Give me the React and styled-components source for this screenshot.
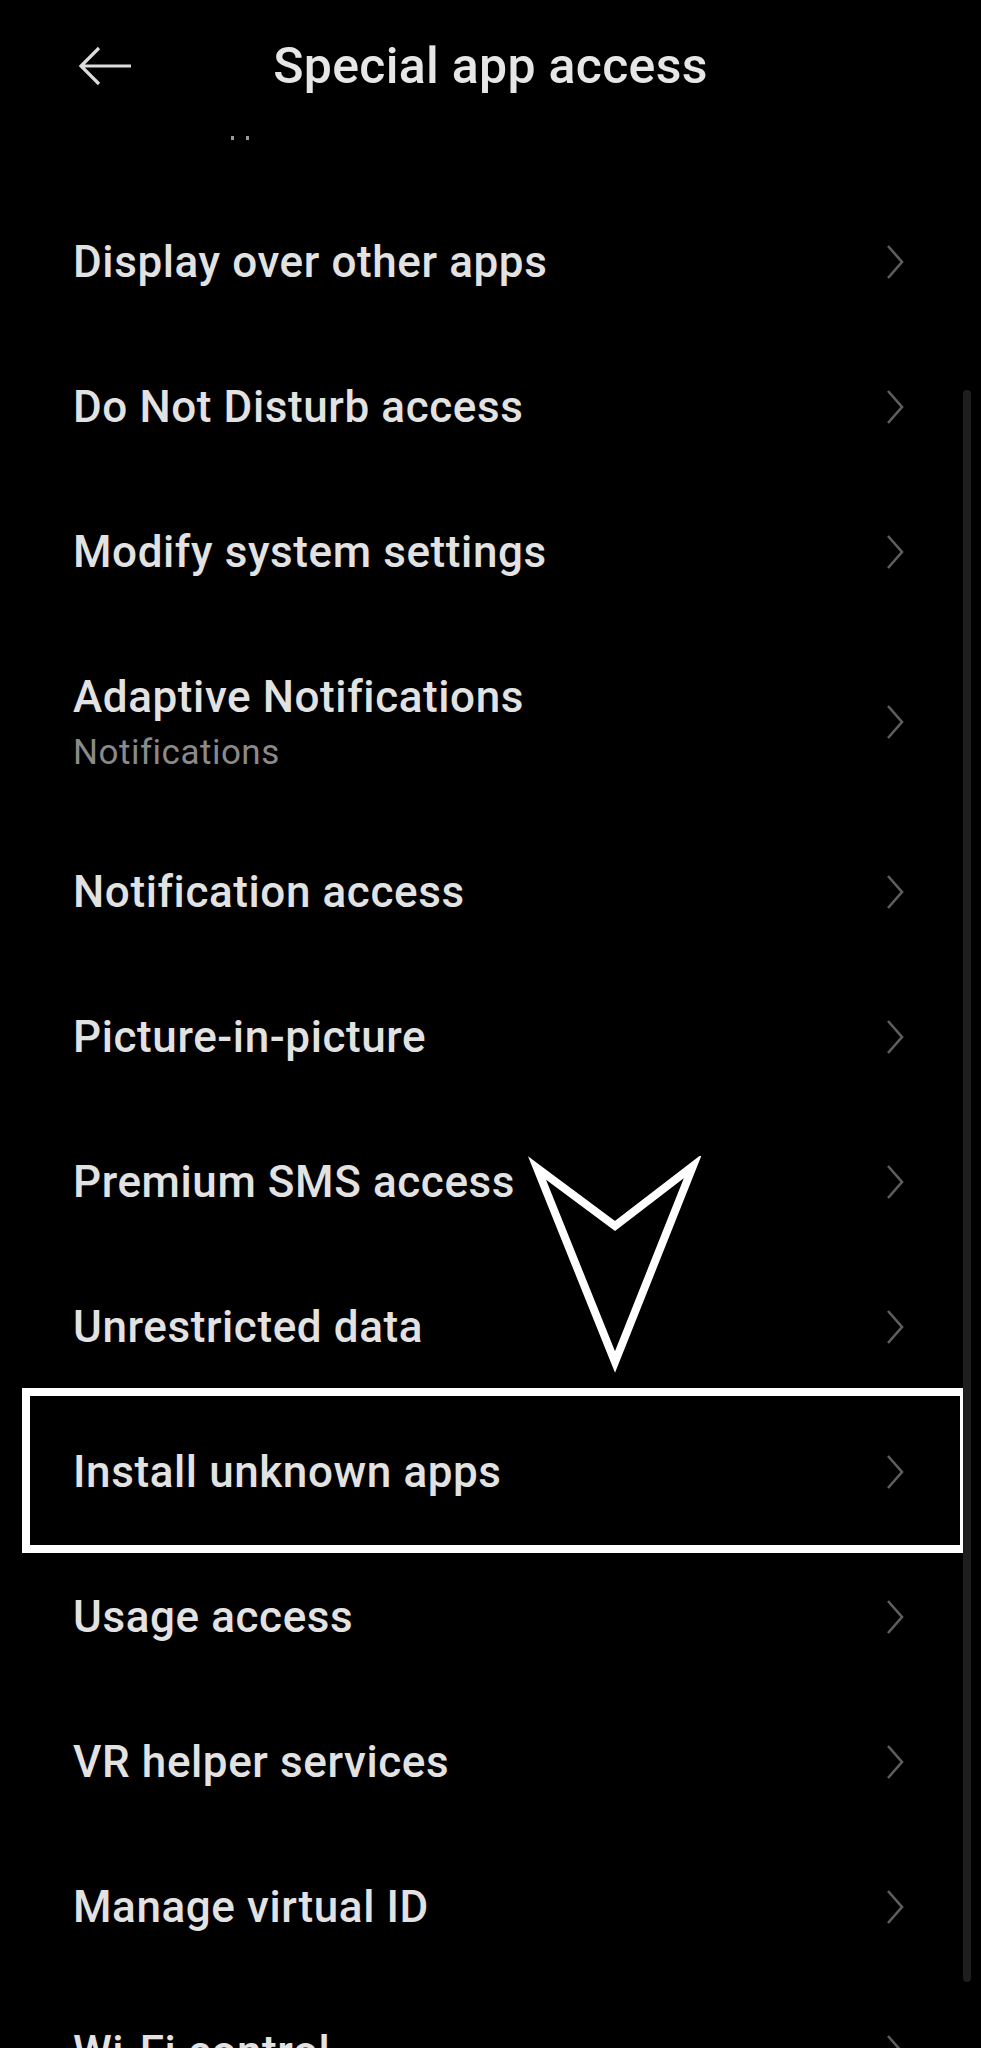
import React from 'react';
import styled, { createGlobalStyle } from 'styled-components';

const GlobalStyle = createGlobalStyle`
  html, body {
    margin: 0;
    padding: 0;
    background: #000;
  }
  body {
    font-family: Roboto, "Noto Sans", "Liberation Sans", sans-serif;
    -webkit-font-smoothing: antialiased;
  }
`;

const Screen = styled.div`
  position: relative;
  width: 981px;
  height: 2048px;
  overflow: hidden;
  background: #000;
  color: #e4e4e4;
`;

const Header = styled.header`
  display: grid;
  grid-template-columns: 1fr auto 1fr;
  align-items: center;
  height: 132px;
`;

const BackButton = styled.button`
  justify-self: start;
  display: flex;
  align-items: center;
  margin-left: 78px;
  padding: 0;
  border: 0;
  background: none;
  cursor: pointer;
`;

const Title = styled.h1`
  margin: 0;
  font-size: 50px;
  font-weight: 500;
  color: #e6e6e6;
  letter-spacing: 0.3px;
`;

const Dots = styled.div`
  display: flex;
  gap: 12px;
  height: 56px;
  padding-left: 231px;
  padding-top: 4px;
  box-sizing: border-box;

  span {
    width: 3px;
    height: 4px;
    background: #9a9a9a;
  }
`;

const List = styled.ul`
  list-style: none;
  margin: 0;
  padding: 0;
`;

const Row = styled.li`
  position: relative;
  display: flex;
  align-items: center;
  justify-content: space-between;
  height: ${({ tall }) => (tall ? '195px' : '145px')};
  padding: 2px 76px 0 73px;
  box-sizing: border-box;

  ${({ highlighted }) =>
    highlighted &&
    `
    &::after {
      content: '';
      position: absolute;
      top: -10px;
      bottom: -10px;
      left: 22px;
      right: 13px;
      border: 8px solid #fff;
      pointer-events: none;
    }
  `}
`;

const Texts = styled.div`
  display: flex;
  flex-direction: column;
  gap: 9px;
`;

const Label = styled.span`
  font-size: 44px;
  font-weight: 500;
  color: #e2e2e2;
  letter-spacing: 0.6px;
`;

const Sub = styled.span`
  font-size: 35px;
  color: #8a8a8a;
  letter-spacing: 0.5px;
`;

const Scrollbar = styled.div`
  position: absolute;
  right: 10px;
  top: 390px;
  width: 8px;
  height: 1592px;
  border-radius: 4px;
  background: #1e1e1e;
`;

const Pointer = styled.svg`
  position: absolute;
  left: 525px;
  top: 1156px;
`;

const Chevron = () => (
  <svg width="20" height="38" viewBox="0 0 20 38" fill="none">
    <path d="M3 3 L17 19 L3 35" stroke="#5e5e5e" strokeWidth="2.6" />
  </svg>
);

const BackArrow = () => (
  <svg width="54" height="40" viewBox="0 0 54 40" fill="none">
    <path d="M3 20 H53 M21 2 L3 20 L21 38" stroke="#dcdcdc" strokeWidth="3.2" />
  </svg>
);

const items = [
  { label: 'Display over other apps' },
  { label: 'Do Not Disturb access' },
  { label: 'Modify system settings' },
  { label: 'Adaptive Notifications', sub: 'Notifications' },
  { label: 'Notification access' },
  { label: 'Picture-in-picture' },
  { label: 'Premium SMS access' },
  { label: 'Unrestricted data' },
  { label: 'Install unknown apps', highlighted: true },
  { label: 'Usage access' },
  { label: 'VR helper services' },
  { label: 'Manage virtual ID' },
  { label: 'Wi-Fi control' },
];

const App = () => (
  <Screen>
    <GlobalStyle />
    <Header>
      <BackButton aria-label="Back">
        <BackArrow />
      </BackButton>
      <Title>Special app access</Title>
    </Header>
    <Dots>
      <span />
      <span />
    </Dots>
    <List>
      {items.map((item) => (
        <Row key={item.label} tall={!!item.sub} highlighted={item.highlighted}>
          <Texts>
            <Label>{item.label}</Label>
            {item.sub && <Sub>{item.sub}</Sub>}
          </Texts>
          <Chevron />
        </Row>
      ))}
    </List>
    <Pointer width="180" height="220" viewBox="0 0 180 220" fill="none">
      <path
        d="M12 12 L90 70 L168 10 L90 206 Z"
        stroke="#fff"
        strokeWidth="8"
        strokeLinejoin="miter"
      />
    </Pointer>
    <Scrollbar />
  </Screen>
);

export default App;
